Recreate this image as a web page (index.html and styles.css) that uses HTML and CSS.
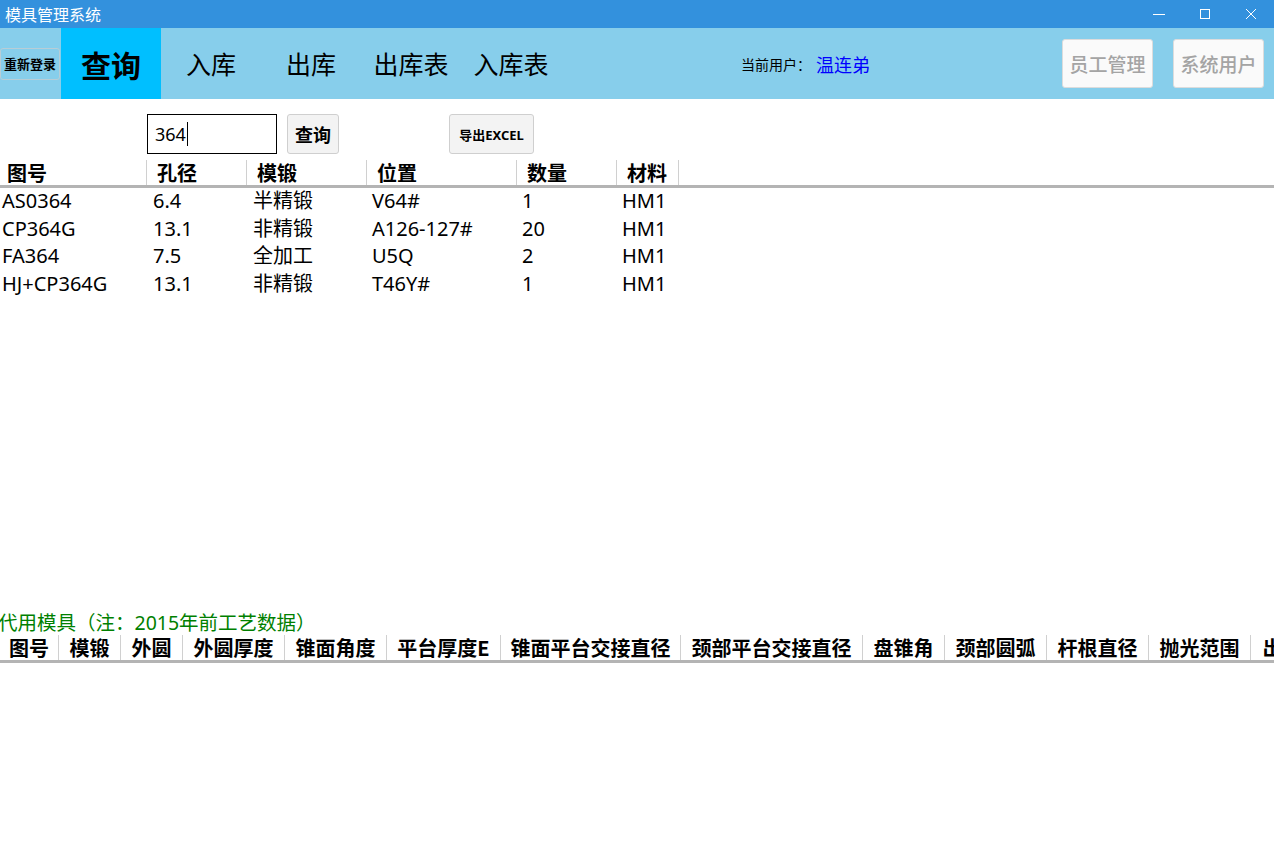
FILE: index.html
```html
<!DOCTYPE html>
<html lang="zh">
<head>
<meta charset="utf-8">
<title>模具管理系统</title>
<link rel="stylesheet" href="styles.css">
</head>
<body>
<div class="app">
  <div class="titlebar">
    <span class="title">模具管理系统</span>
    <div class="winctl">
      <span class="wbtn"><svg width="12" height="12" viewBox="0 0 12 12"><path d="M0 6.5H12" stroke="#fff" stroke-width="1"/></svg></span>
      <span class="wbtn"><svg width="12" height="12" viewBox="0 0 12 12"><rect x="1.5" y="1.5" width="9" height="9" fill="none" stroke="#fff" stroke-width="1"/></svg></span>
      <span class="wbtn"><svg width="12" height="12" viewBox="0 0 12 12"><path d="M1 1L11 11M11 1L1 11" stroke="#fff" stroke-width="1"/></svg></span>
    </div>
  </div>
  <div class="navbar">
    <button class="relogin">重新登录</button>
    <div class="tabs">
      <div class="tab active">查询</div>
      <div class="tab">入库</div>
      <div class="tab">出库</div>
      <div class="tab">出库表</div>
      <div class="tab">入库表</div>
    </div>
    <div class="user"><span class="ulabel">当前用户：</span><span class="uname">温连弟</span></div>
    <div class="admin">
      <button class="abtn">员工管理</button>
      <button class="abtn">系统用户</button>
    </div>
  </div>
  <div class="toolbar">
    <div class="search"><span>364</span><span class="caret"></span></div>
    <button class="qbtn">查询</button>
    <button class="xbtn">导出EXCEL</button>
  </div>
  <div class="results">
    <div class="grid1 head">
      <div class="hc first">图号</div>
      <div class="hc">孔径</div>
      <div class="hc">模锻</div>
      <div class="hc">位置</div>
      <div class="hc">数量</div>
      <div class="hc">材料</div>
    </div>
    <div class="rows">
      <div class="grid1 row"><div class="c c1">AS0364</div><div class="c c2">6.4</div><div class="c c3">半精锻</div><div class="c c4">V64#</div><div class="c c5">1</div><div class="c c6">HM1</div></div>
      <div class="grid1 row"><div class="c c1">CP364G</div><div class="c c2">13.1</div><div class="c c3">非精锻</div><div class="c c4">A126-127#</div><div class="c c5">20</div><div class="c c6">HM1</div></div>
      <div class="grid1 row"><div class="c c1">FA364</div><div class="c c2">7.5</div><div class="c c3">全加工</div><div class="c c4">U5Q</div><div class="c c5">2</div><div class="c c6">HM1</div></div>
      <div class="grid1 row"><div class="c c1">HJ+CP364G</div><div class="c c2">13.1</div><div class="c c3">非精锻</div><div class="c c4">T46Y#</div><div class="c c5">1</div><div class="c c6">HM1</div></div>
    </div>
  </div>
  <div class="caption">代用模具（注：2015年前工艺数据）</div>
  <div class="grid2 head2">
    <div class="hc2">图号</div>
    <div class="hc2">模锻</div>
    <div class="hc2">外圆</div>
    <div class="hc2">外圆厚度</div>
    <div class="hc2">锥面角度</div>
    <div class="hc2">平台厚度E</div>
    <div class="hc2">锥面平台交接直径</div>
    <div class="hc2">颈部平台交接直径</div>
    <div class="hc2">盘锥角</div>
    <div class="hc2">颈部圆弧</div>
    <div class="hc2">杆根直径</div>
    <div class="hc2">抛光范围</div>
    <div class="hc2">出厂日期</div>
  </div>
</div>
</body>
</html>
```

FILE: styles.css
```css
* { box-sizing: border-box; }
html, body { margin: 0; padding: 0; background: #fff; }
body {
  width: 1274px;
  height: 856px;
  overflow: hidden;
  font-family: "Noto Sans CJK SC", "Noto Sans", sans-serif;
  color: #000;
}
.app { display: flex; flex-direction: column; width: 1274px; }

.titlebar {
  height: 28px;
  background: #3391dd;
  display: flex;
  align-items: center;
  justify-content: space-between;
}
.title { color: #fff; font-size: 16px; line-height: 28px; padding-left: 5px; }
.winctl { display: flex; height: 28px; }
.wbtn { width: 46px; height: 28px; display: flex; align-items: center; justify-content: center; }

.navbar {
  height: 71px;
  background: #87ceeb;
  display: flex;
  align-items: center;
}
.relogin {
  width: 60px;
  height: 32px;
  margin-right: 1px;
  padding: 0;
  border: 1px solid #b8cdd6;
  border-radius: 3px;
  background: transparent;
  font-family: inherit;
  font-size: 13px;
  font-weight: bold;
  color: #000;
}
.tabs { display: flex; height: 71px; }
.tab {
  width: 100px;
  height: 71px;
  display: flex;
  align-items: center;
  justify-content: center;
  font-size: 25px;
  line-height: 1;
}
.tab.active { background: #00bfff; font-size: 30px; font-weight: bold; }
.user { margin-left: 180px; display: flex; align-items: center; }
.ulabel { font-size: 14px; }
.uname { font-size: 18px; color: #0000ff; margin-left: 5px; }
.admin { margin-left: auto; margin-right: 10px; display: flex; gap: 20px; }
.abtn {
  width: 91px;
  height: 49px;
  padding: 0;
  background: #fafafa;
  border: 1px solid #dcdcdc;
  border-radius: 3px;
  font-family: inherit;
  font-size: 19px;
  font-weight: 500;
  color: #a4a4a4;
}

.toolbar {
  margin-top: 15px;
  height: 40px;
  display: flex;
  align-items: stretch;
  padding-left: 147px;
}
.search {
  width: 130px;
  border: 1px solid #000;
  display: flex;
  align-items: center;
  padding-left: 7px;
  font-family: "Noto Sans", "Noto Sans CJK SC", sans-serif;
  font-size: 18px;
  line-height: 1;
}
.caret { display: inline-block; width: 1px; height: 24px; background: #000; margin-left: 1px; }
.qbtn {
  margin-left: 10px;
  width: 52px;
  padding: 0;
  background: #f3f3f3;
  border: 1px solid #cfcfcf;
  border-radius: 3px;
  font-family: inherit;
  font-size: 18px;
  font-weight: bold;
  color: #000;
}
.xbtn {
  margin-left: 110px;
  width: 85px;
  padding: 0;
  background: #f3f3f3;
  border: 1px solid #cfcfcf;
  border-radius: 3px;
  font-family: "Noto Sans", "Noto Sans CJK SC", sans-serif;
  font-size: 13px;
  font-weight: bold;
  color: #000;
}

.results { margin-top: 6px; height: 451px; }
.grid1 { display: grid; grid-template-columns: 147px 100px 120px 150px 100px 62px; }
.head { height: 28px; border-bottom: 3px solid #b4b4b4; width: 1274px; }
.hc {
  border-right: 1px solid #d0d0d0;
  font-size: 20px;
  font-weight: bold;
  line-height: 25px;
  padding-left: 10px;
  white-space: nowrap;
}
.hc.first { padding-left: 7px; }
.rows { margin-top: -1px; }
.row { height: 27.67px; }
.c {
  font-family: "Noto Sans", "Noto Sans CJK SC", sans-serif;
  font-size: 20px;
  line-height: 27.67px;
  white-space: nowrap;
}
.c1 { padding-left: 2px; }
.c2, .c3 { padding-left: 6px; }
.c4, .c5, .c6 { padding-left: 5px; }

.caption {
  height: 24px;
  line-height: 24px;
  font-family: "Noto Sans", "Noto Sans CJK SC", sans-serif;
  font-size: 19.5px;
  color: #008000;
  margin-left: -2px;
  white-space: nowrap;
}
.grid2 {
  display: grid;
  grid-template-columns: 59px 62px 62px 102px 102px 114px 180px 182px 82px 102px 102px 102px 104px;
  width: 1274px;
}
.head2 { height: 28px; border-bottom: 3px solid #b4b4b4; }
.hc2 {
  border-right: 1px solid #d0d0d0;
  font-size: 20px;
  font-weight: bold;
  line-height: 25px;
  text-align: center;
  white-space: nowrap;
}
```
